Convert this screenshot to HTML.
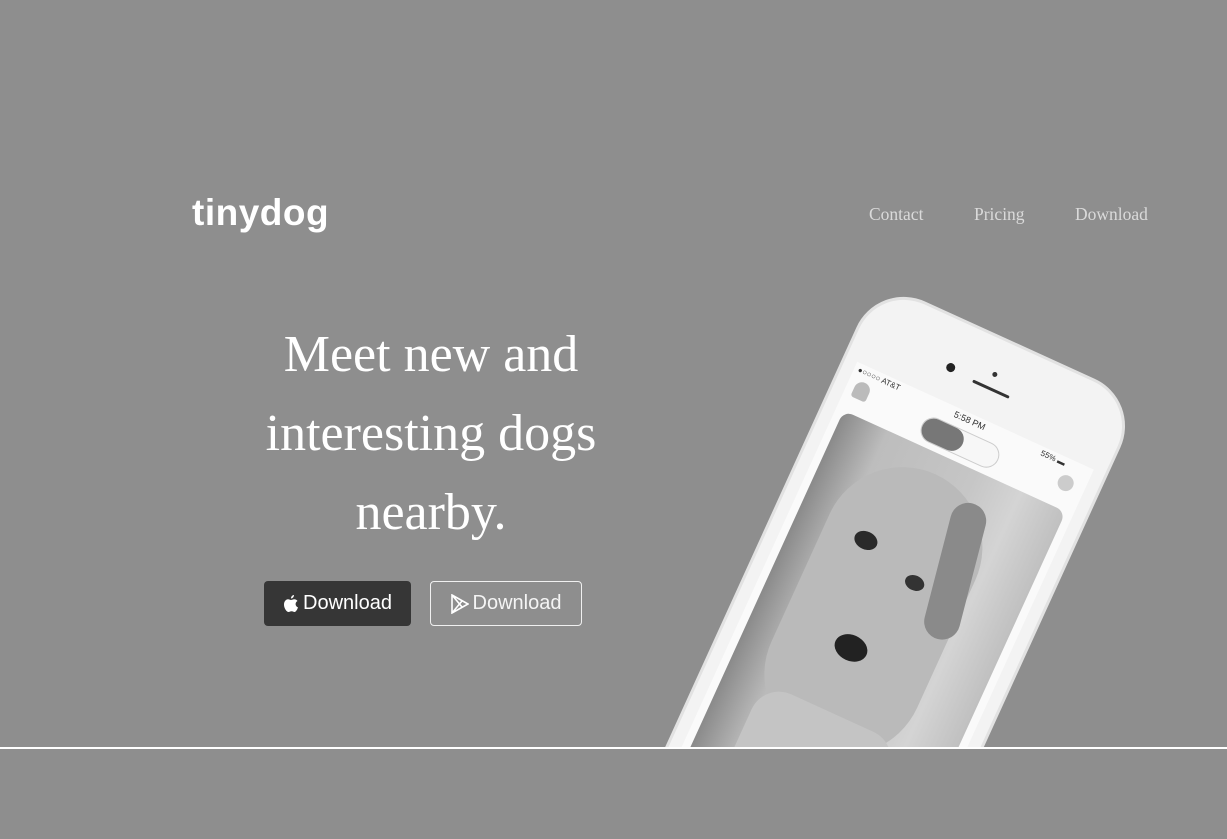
<!DOCTYPE html>
<html><head><meta charset="utf-8"><style>
*{margin:0;padding:0;box-sizing:border-box}
html{width:1227px;height:839px;overflow:hidden}
body{width:1227px;height:839px;background:#8e8e8e;position:relative;overflow:hidden;font-family:"Liberation Sans",sans-serif}
.top{position:absolute;left:0;top:0;width:1227px;height:747px;overflow:hidden}
.line{position:absolute;left:0;top:747px;width:1227px;height:2px;background:#fff}
.logo{position:absolute;left:192px;top:192px;color:#fff;font-weight:bold;font-size:37px;letter-spacing:0.5px}
.nav{position:absolute;top:204px;font-family:"Liberation Serif",serif;font-size:17.5px;color:#dadada}
h1{position:absolute;left:231px;top:315px;width:400px;text-align:center;font-family:"Liberation Serif",serif;font-weight:normal;font-size:52px;line-height:79px;color:#fff}
.btn{position:absolute;top:581px;height:45px;border-radius:4px;color:#fff;font-size:20px;display:flex;align-items:center;justify-content:center;gap:4px}
.b1{left:264px;width:147px;background:#363636}
.b2{left:430px;width:152px;border:1px solid #f0f0f0;color:#f4f4f4}
.phone{position:absolute;left:878px;top:280px;width:290px;height:660px;transform:rotate(24.5deg);transform-origin:0 0;background:#f3f3f3;border-radius:52px;border:3px solid #e2e2e2}
.screen{position:absolute;left:12px;top:80px;width:260px;height:560px;background:#fafafa}
.card{position:absolute;left:8px;top:50px;width:244px;height:500px;border-radius:10px;background:linear-gradient(90deg,#8a8a8a 0%,#bdbdbd 20%,#c6c6c6 60%,#d4d4d4 80%,#c0c0c0 100%);overflow:hidden}
</style></head><body>
<div class="top">
<div class="phone">
 <div style="position:absolute;left:95px;top:42px;width:9px;height:9px;border-radius:50%;background:#222"></div>
 <div style="position:absolute;left:125px;top:48px;width:40px;height:3px;border-radius:2px;background:#333"></div>
 <div style="position:absolute;left:140px;top:32px;width:5px;height:5px;border-radius:50%;background:#333"></div>
 <div class="screen">
  <div style="position:absolute;left:4px;top:2px;font-size:8px;color:#333">●○○○○ AT&amp;T</div>
  <div style="position:absolute;left:110px;top:2px;font-size:9px;color:#333">5:58 PM</div>
  <div style="position:absolute;left:205px;top:2px;font-size:8px;color:#333">55% ▬</div>
  <div style="position:absolute;left:8px;top:16px;width:16px;height:18px;border-radius:8px 8px 3px 3px;background:#bbb"></div>
  <div style="position:absolute;left:232px;top:16px;width:16px;height:16px;border-radius:50%;background:#ccc"></div>
  <div style="position:absolute;left:85px;top:18px;width:84px;height:26px;border-radius:13px;border:1px solid #ccc;background:#f7f7f7"><div style="width:44px;height:24px;border-radius:12px;background:#777"></div></div>
  <div class="card">
   <div style="position:absolute;left:30px;top:20px;width:160px;height:300px;border-radius:80px;background:#bababa"></div>
   <div style="position:absolute;left:150px;top:30px;width:36px;height:140px;border-radius:18px;background:#8a8a8a;transform:rotate(-10deg)"></div>
   <div style="position:absolute;left:62px;top:100px;width:24px;height:18px;border-radius:50%;background:#2a2a2a"></div>
   <div style="position:absolute;left:126px;top:120px;width:20px;height:15px;border-radius:50%;background:#333"></div>
   <div style="position:absolute;left:88px;top:200px;width:34px;height:26px;border-radius:50%;background:#222"></div>
   <div style="position:absolute;left:40px;top:280px;width:150px;height:220px;background:#c4c4c4;border-radius:30px"></div>
  </div>
 </div>
</div>
</div>
<div class="line"></div>
<div class="logo">tinydog</div>
<div class="nav" style="left:869px">Contact</div>
<div class="nav" style="left:974px">Pricing</div>
<div class="nav" style="left:1075px">Download</div>
<h1>Meet new and interesting dogs nearby.</h1>
<div class="btn b1"><svg width="16" height="18" viewBox="0 0 16 18"><path fill="#fff" d="M11 0c0 2-1.5 3.5-3 3.5C8 1.5 9.5 0 11 0zM8 5c1 0 2-.8 3.3-.8 1.3 0 2.5.7 3.2 1.8-2.8 1.5-2.4 5.3.5 6.4-.7 2-2 4.6-3.4 4.6-1.2 0-1.5-.7-3-.7s-2 .7-3.1.7C3.8 17 1 13.5 1 9.6 1 6.4 3 4.3 5 4.3 6.3 4.3 7 5 8 5z"/></svg>Download</div>
<div class="btn b2"><svg width="18" height="20" viewBox="0 0 18 20"><path fill="none" stroke="#fff" stroke-width="1.6" d="M1 1l16 9-16 9z M1 1l10 12 M1 19l10-12"/></svg>Download</div>
</body></html>
